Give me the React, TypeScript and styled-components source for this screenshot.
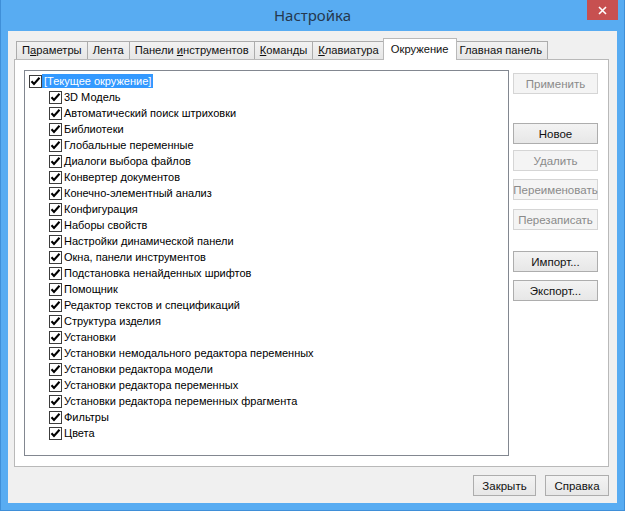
import React from 'react';
import styled, { createGlobalStyle } from 'styled-components';

const GlobalStyle = createGlobalStyle`
  html, body {
    margin: 0;
    padding: 0;
    overflow: hidden;
  }
`;

const Window = styled.div`
  box-sizing: border-box;
  width: 625px;
  height: 511px;
  background: #58acf2;
  border: 1px solid #3f8fd8;
  border-top: none;
  padding: 0 7px 7px 7px;
  display: flex;
  flex-direction: column;
  font-family: "Liberation Sans", Arial, sans-serif;
`;

const TitleBar = styled.div`
  position: relative;
  height: 31px;
  display: flex;
  align-items: center;
  justify-content: center;
`;

const Title = styled.div`
  font-family: "Noto Sans", "Liberation Sans", sans-serif;
  font-size: 15px;
  color: #25384e;
  margin-top: -1px;
`;

const CloseButton = styled.div`
  position: absolute;
  top: 0;
  right: -1px;
  width: 31px;
  height: 20px;
  background: #c75050;
  color: #fff;
  display: flex;
  align-items: center;
  justify-content: center;
`;

const Client = styled.div`
  flex: 1;
  background: #f0f0f0;
  display: flex;
  flex-direction: column;
  padding: 7px 8px 0 6px;
`;

const TabStrip = styled.div`
  display: flex;
  align-items: flex-end;
  height: 21px;
  padding-left: 2px;
`;

const Tab = styled.div<{ $active?: boolean }>`
  box-sizing: border-box;
  height: ${(p) => (p.$active ? '22px' : '18px')};
  padding: ${(p) => (p.$active ? '3px 7px 0' : '1px 5px 0')};
  margin: ${(p) => (p.$active ? '0 -2px -1px -2px' : '0 0 0 -1px')};
  border: 1px solid ${(p) => (p.$active ? '#b9b9b9' : '#acacac')};
  border-bottom: none;
  background: ${(p) => (p.$active ? '#fff' : 'linear-gradient(#f2f2f2, #e6e6e6)')};
  position: relative;
  z-index: ${(p) => (p.$active ? 1 : 0)};
  font-size: 11.2px;
  line-height: 15px;
  color: #111;
  white-space: nowrap;

  &:first-child {
    margin-left: 0;
  }
`;

const Panel = styled.div`
  box-sizing: border-box;
  height: 408px;
  background: #fff;
  border: 1px solid #b9b9b9;
  display: flex;
  padding: 10px 10px 10px 9px;
`;

const TreeBox = styled.div`
  box-sizing: border-box;
  width: 486px;
  height: 386px;
  border: 1px solid #828790;
  padding-top: 2px;
  font-size: 11px;
  color: #000;
`;

const Row = styled.div<{ $level: number }>`
  height: 16px;
  display: flex;
  align-items: center;
  padding-left: ${(p) => 4 + p.$level * 20}px;
`;

const Label = styled.span<{ $selected?: boolean }>`
  height: 14px;
  line-height: 14px;
  padding: 0 2px;
  white-space: nowrap;
  background: ${(p) => (p.$selected ? '#3399ff' : 'transparent')};
  color: ${(p) => (p.$selected ? '#fff' : '#000')};
`;

const ButtonColumn = styled.div`
  display: flex;
  flex-direction: column;
  margin-left: 4px;
  padding-top: 3px;
`;

const Button = styled.div<{ $disabled?: boolean; $gap?: number; $width?: number }>`
  box-sizing: border-box;
  width: ${(p) => p.$width ?? 85}px;
  height: 21px;
  margin-top: ${(p) => p.$gap ?? 0}px;
  border: 1px solid ${(p) => (p.$disabled ? '#d5d5d5' : '#adadad')};
  background: ${(p) => (p.$disabled ? '#f4f4f4' : 'linear-gradient(#f3f3f3, #e7e7e7)')};
  color: ${(p) => (p.$disabled ? '#8a8a8a' : '#111')};
  font-size: 11.5px;
  display: flex;
  align-items: center;
  justify-content: center;
  white-space: nowrap;
`;

const Footer = styled.div`
  display: flex;
  justify-content: flex-end;
  gap: 9px;
  padding-top: 8px;
`;

const CheckBox: React.FC = () => (
  <svg width="13" height="13" viewBox="0 0 13 13" style={{ flex: 'none' }}>
    <rect x="0.5" y="0.5" width="12" height="12" fill="#fff" stroke="#3c3c3c" />
    <path d="M2.5 6.2 L5 9 L10.5 2.8" fill="none" stroke="#000" strokeWidth="2.1" />
  </svg>
);

const tabs: { label: React.ReactNode; active?: boolean }[] = [
  { label: <>П<u>а</u>раметры</> },
  { label: 'Лента' },
  { label: <>Панели <u>и</u>нструментов</> },
  { label: <><u>К</u>оманды</> },
  { label: <><u>К</u>лавиатура</> },
  { label: 'Окружение', active: true },
  { label: 'Главная панель' },
];

const items = [
  '3D Модель',
  'Автоматический поиск штриховки',
  'Библиотеки',
  'Глобальные переменные',
  'Диалоги выбора файлов',
  'Конвертер документов',
  'Конечно-элементный анализ',
  'Конфигурация',
  'Наборы свойств',
  'Настройки динамической панели',
  'Окна, панели инструментов',
  'Подстановка ненайденных шрифтов',
  'Помощник',
  'Редактор текстов и спецификаций',
  'Структура изделия',
  'Установки',
  'Установки немодального редактора переменных',
  'Установки редактора модели',
  'Установки редактора переменных',
  'Установки редактора переменных фрагмента',
  'Фильтры',
  'Цвета',
];

const sideButtons = [
  { label: 'Применить', disabled: true, gap: 0 },
  { label: 'Новое', gap: 29 },
  { label: 'Удалить', disabled: true, gap: 6 },
  { label: 'Переименовать', disabled: true, gap: 8 },
  { label: 'Перезаписать', disabled: true, gap: 9 },
  { label: 'Импорт...', gap: 21 },
  { label: 'Экспорт...', gap: 8 },
];

export default function App(): React.ReactElement {
  return (
    <>
      <GlobalStyle />
      <Window>
        <TitleBar>
          <Title>Настройка</Title>
          <CloseButton>
            <svg width="9" height="9" viewBox="0 0 9 9">
              <path d="M1 1 L8 8 M8 1 L1 8" stroke="#fff" strokeWidth="1.6" />
            </svg>
          </CloseButton>
        </TitleBar>
        <Client>
          <TabStrip>
            {tabs.map((t, i) => (
              <Tab key={i} $active={t.active}>
                {t.label}
              </Tab>
            ))}
          </TabStrip>
          <Panel>
            <TreeBox>
              <Row $level={0}>
                <CheckBox />
                <Label $selected>[Текущее окружение]</Label>
              </Row>
              {items.map((name) => (
                <Row key={name} $level={1}>
                  <CheckBox />
                  <Label>{name}</Label>
                </Row>
              ))}
            </TreeBox>
            <ButtonColumn>
              {sideButtons.map((b) => (
                <Button key={b.label} $disabled={b.disabled} $gap={b.gap}>
                  {b.label}
                </Button>
              ))}
            </ButtonColumn>
          </Panel>
          <Footer>
            <Button $width={63}>Закрыть</Button>
            <Button $width={64}>Справка</Button>
          </Footer>
        </Client>
      </Window>
    </>
  );
}
